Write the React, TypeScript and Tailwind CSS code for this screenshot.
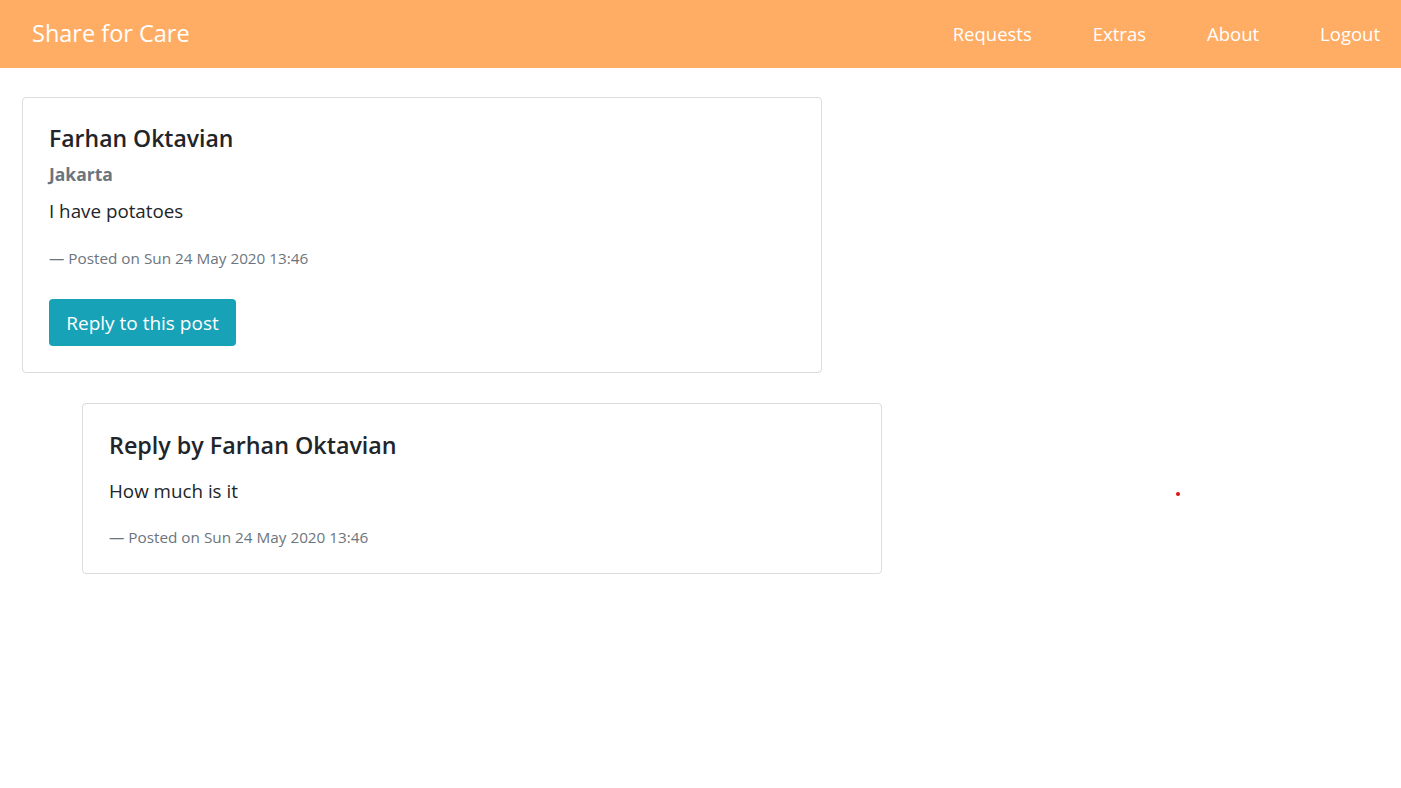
import React from 'react';

const font = { fontFamily: '"Open Sans", "Noto Sans", sans-serif' };

function Navbar() {
  return (
    <nav className="h-[68px] bg-[#ffad64] flex items-center justify-between pl-[32px] pr-[21px]">
      <span className="text-[23.5px] text-white leading-none">Share for Care</span>
      <div className="flex items-center gap-[61px] text-[18.5px] text-white">
        <span>Requests</span>
        <span>Extras</span>
        <span>About</span>
        <span>Logout</span>
      </div>
    </nav>
  );
}

function Posted() {
  return (
    <p className="text-[15.3px] leading-[20px] text-[#6c757d]">— Posted on Sun 24 May 2020 13:46</p>
  );
}

export default function App() {
  return (
    <div className="min-h-[788px] bg-white relative" style={font}>
      <Navbar />
      <div className="pt-[29px] pl-[22px]">
        {/* original post */}
        <div className="w-[800px] border border-[#dcdcdc] rounded-[4px] px-[26px] pt-[26px] pb-[26px] text-[#212529]">
          <h4 className="text-[23px] leading-[28px] font-semibold">Farhan Oktavian</h4>
          <h6 className="mt-[11px] text-[17.5px] leading-[22px] font-bold text-[#6c757d]">Jakarta</h6>
          <p className="mt-[14px] text-[18.8px] leading-[24px]">I have potatoes</p>
          <div className="mt-[25px]">
            <Posted />
          </div>
          <button className="mt-[31px] h-[47px] w-[187px] rounded-[4px] bg-[#17a2b8] text-white text-[19px] pt-[2px]">
            Reply to this post
          </button>
        </div>

        {/* reply */}
        <div className="mt-[30px] ml-[60px] w-[800px] border border-[#dcdcdc] rounded-[4px] px-[26px] pt-[27px] pb-[26px] text-[#212529]">
          <h4 className="text-[23.3px] leading-[28px] font-semibold">Reply by Farhan Oktavian</h4>
          <p className="mt-[20px] text-[18.8px] leading-[24px]">How much is it</p>
          <div className="mt-[24px]">
            <Posted />
          </div>
        </div>
      </div>
      <span className="absolute left-[1176px] top-[492px] w-[4px] h-[4px] rounded-full bg-[#e01010]" />
    </div>
  );
}
